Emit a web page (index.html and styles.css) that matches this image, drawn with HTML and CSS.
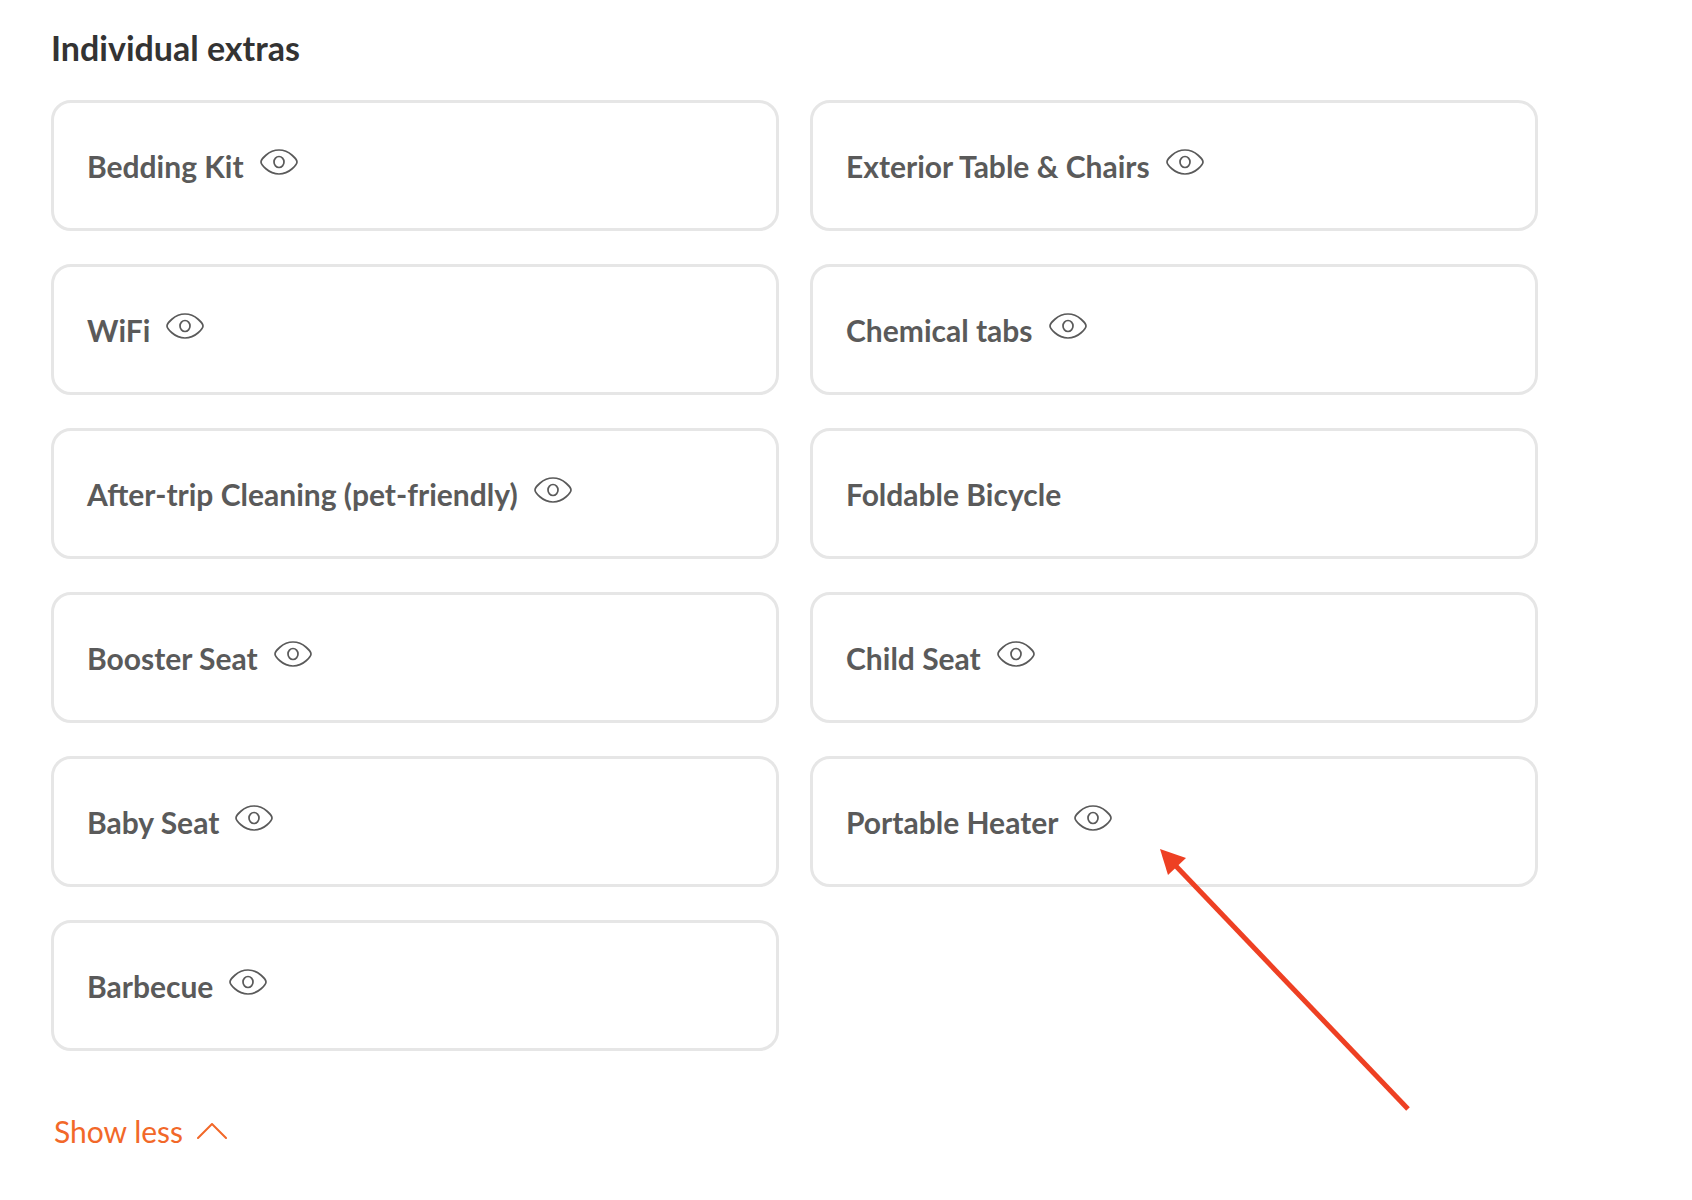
FILE: index.html
```
<!DOCTYPE html>
<html lang="en">

<head>
    <meta charset="UTF-8">
    <meta name="viewport" content="width=device-width, initial-scale=1.0">
    <title>Individual extras</title>
    <link rel="stylesheet" href="styles.css">
</head>

<body>

    <!-- eye icon shared by all the cards -->
    <svg class="sprite" aria-hidden="true">
        <symbol id="eye" viewBox="0 0 38 26">
            <path d="M1 13C1 11 8 1 19 1S37 11 37 13S30 25 19 25S1 15 1 13Z" />
            <ellipse cx="19" cy="13" rx="5" ry="5.500" />
        </symbol>
    </svg>

    <main class="extras">
        <h2 class="extras-title">Individual extras</h2>
        <ul class="extras-list">
            <li class="card">
                <span class="card-name">Bedding Kit</span>
                <button class="eye-btn" aria-label="View Bedding Kit"><svg><use href="#eye" /></svg></button>
            </li>
            <li class="card">
                <span class="card-name">Exterior Table &amp; Chairs</span>
                <button class="eye-btn" aria-label="View Exterior Table &amp; Chairs"><svg><use href="#eye" /></svg></button>
            </li>
            <li class="card">
                <span class="card-name">WiFi</span>
                <button class="eye-btn" aria-label="View WiFi"><svg><use href="#eye" /></svg></button>
            </li>
            <li class="card">
                <span class="card-name">Chemical tabs</span>
                <button class="eye-btn" aria-label="View Chemical tabs"><svg><use href="#eye" /></svg></button>
            </li>
            <li class="card">
                <span class="card-name">After-trip Cleaning (pet-friendly)</span>
                <button class="eye-btn" aria-label="View After-trip Cleaning"><svg><use href="#eye" /></svg></button>
            </li>
            <li class="card">
                <span class="card-name">Foldable Bicycle</span>
            </li>
            <li class="card">
                <span class="card-name">Booster Seat</span>
                <button class="eye-btn" aria-label="View Booster Seat"><svg><use href="#eye" /></svg></button>
            </li>
            <li class="card">
                <span class="card-name">Child Seat</span>
                <button class="eye-btn" aria-label="View Child Seat"><svg><use href="#eye" /></svg></button>
            </li>
            <li class="card">
                <span class="card-name">Baby Seat</span>
                <button class="eye-btn" aria-label="View Baby Seat"><svg><use href="#eye" /></svg></button>
            </li>
            <li class="card">
                <span class="card-name">Portable Heater</span>
                <button class="eye-btn" aria-label="View Portable Heater"><svg><use href="#eye" /></svg></button>
                <svg class="arrow" viewBox="0 0 252 264" aria-hidden="true">
                    <path class="arrow-line" d="M14 15L248 260" />
                    <path class="arrow-head" d="M0 0L26 9L8 26Z" />
                </svg>
            </li>
            <li class="card">
                <span class="card-name">Barbecue</span>
                <button class="eye-btn" aria-label="View Barbecue"><svg><use href="#eye" /></svg></button>
            </li>
        </ul>
        <button class="show-less">
            Show less
            <svg class="chevron" viewBox="0 0 30 16" aria-hidden="true">
                <path d="M1 15L15 1L29 15" />
            </svg>
        </button>
    </main>

</body>

</html>
```
FILE: styles.css
```
* {
    box-sizing: border-box;
}

body {
    margin: 0;
    background-color: #fff;
    color: #5a5a5a;
    font-family: Lato, "Liberation Sans", sans-serif;
}

button {
    padding: 0;
    border: none;
    background: none;
    color: inherit;
    font: inherit;
    cursor: pointer;
}

.sprite {
    display: none;
}

.extras {
    padding: 28px 154px 40px 51px;
}

.extras-title {
    margin: 0 0 32px;
    color: #333;
    font-size: 34px;
    font-weight: bold;
    line-height: 40px;
}

.extras-list {
    display: grid;
    grid-template-columns: 1fr 1fr;
    gap: 33px 31px;
    margin: 0;
    padding: 0;
    list-style: none;
}

.card {
    position: relative;
    display: flex;
    align-items: center;
    gap: 16px;
    min-height: 131px;
    padding: 0 33px;
    border: 3px solid #e6e6e6;
    border-radius: 20px;
}

.card-name {
    font-size: 30px;
    font-weight: bold;
    line-height: 40px;
}

.eye-btn {
    height: 26px;
    margin-bottom: 8px;
}

.eye-btn svg {
    display: block;
    width: 38px;
    height: 26px;
    fill: none;
    stroke: #5a5a5a;
    stroke-width: 1.7;
}

/* points at the heater card, runs out over the space below it */
.arrow {
    position: absolute;
    top: 90px;
    left: 347px;
    width: 252px;
    height: 264px;
    pointer-events: none;
}

.arrow-line {
    fill: none;
    stroke: #ee4023;
    stroke-width: 5;
}

.arrow-head {
    fill: #ee4023;
}

.show-less {
    display: flex;
    align-items: center;
    gap: 14px;
    margin-top: 60px;
    padding: 0 3px;
    color: #f26829;
    font-size: 30px;
    line-height: 40px;
}

.chevron {
    width: 30px;
    height: 16px;
    fill: none;
    stroke: #f26829;
    stroke-width: 2;
    stroke-linecap: round;
    stroke-linejoin: round;
}
```
